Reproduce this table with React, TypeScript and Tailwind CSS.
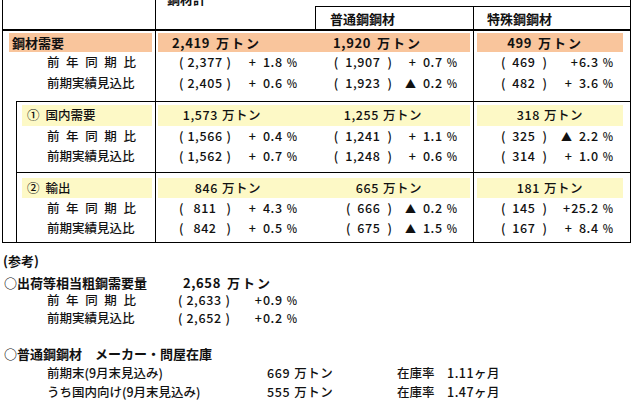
import React from "react";

const ORANGE = "bg-[#f9c59c]";
const YELLOW = "bg-[#fdf9c6]";

function Pct({ v }: { v: string }) {
  const sign = v[0];
  const rest = v.slice(1);
  const spaced = rest.startsWith(" ");
  return (
    <span className="inline-flex items-center whitespace-nowrap">
      <span className={sign === "▲" ? "text-[11px]" : ""}>{sign}</span>
      <span className={spaced ? "ml-[7px] tracking-[0.6px]" : "ml-[1px] tracking-[0.6px]"}>{rest.trim()}</span>
      <span className="ml-[4px] text-[11px]">%</span>
    </span>
  );
}

function Par({ v, wide }: { v: string; wide?: boolean }) {
  return wide ? (
    <span className="inline-flex w-[52px] justify-between whitespace-nowrap">
      <span>(</span>
      <span className="tracking-[0.6px]">{v}</span>
      <span>)</span>
    </span>
  ) : (
    <span className="inline-flex gap-[7px] whitespace-nowrap">
      <span>(</span>
      <span className="tracking-[0.6px]">{v}</span>
      <span>)</span>
    </span>
  );
}

type RowProps = {
  h: string;
  lower?: boolean;
  topLine?: boolean;
  c1?: React.ReactNode;
  c2?: React.ReactNode;
  c3?: React.ReactNode;
  c4?: React.ReactNode;
};

function Row({ h, lower, topLine, c1, c2, c3, c4 }: RowProps) {
  const t = topLine ? "border-t border-black" : "";
  return (
    <div className={`flex ${h}`}>
      {lower ? (
        <div className="flex w-[152px] shrink-0">
          <div className="w-[13px] shrink-0" />
          <div className={`flex-1 border-l border-black ${t}`}>{c1}</div>
        </div>
      ) : (
        <div className="w-[152px] shrink-0">{c1}</div>
      )}
      <div className={`w-[160px] shrink-0 border-l border-black ${t}`}>{c2}</div>
      <div className={`w-[158px] shrink-0 ${t}`}>{c3}</div>
      <div className={`w-[157px] shrink-0 border-l border-black ${t}`}>{c4}</div>
    </div>
  );
}

type Sub = { label: "a" | "b"; v: [string, string, string, string, string, string] };

function Label({ kind }: { kind: "a" | "b" }) {
  return kind === "a" ? (
    <div className="flex w-[89px] justify-between">
      <span>前</span>
      <span>年</span>
      <span>同</span>
      <span>期</span>
      <span>比</span>
    </div>
  ) : (
    <div className="w-[89px] whitespace-nowrap">前期実績見込比</div>
  );
}

function SubRow({ s, lower, h }: { s: Sub; lower?: boolean; h: string }) {
  return (
    <Row
      h={h}
      lower={lower}
      c1={
        <div className={`flex h-full items-center ${lower ? "pl-[30px]" : "pl-[44px]"}`}>
          <Label kind={s.label} />
        </div>
      }
      c2={
        <div className="flex h-full items-center">
          <div className="flex w-[75px] justify-end">
            <Par v={s.v[0]} wide />
          </div>
          <div className="flex w-[66px] justify-end">
            <Pct v={s.v[1]} />
          </div>
        </div>
      }
      c3={
        <div className="flex h-full items-center">
          <div className="flex w-[77px] justify-end">
            <Par v={s.v[2]} />
          </div>
          <div className="flex w-[65px] justify-end">
            <Pct v={s.v[3]} />
          </div>
        </div>
      }
      c4={
        <div className="flex h-full items-center">
          <div className="flex w-[73px] justify-end">
            <Par v={s.v[4]} />
          </div>
          <div className="flex w-[66px] justify-end">
            <Pct v={s.v[5]} />
          </div>
        </div>
      }
    />
  );
}

function Ton({ v, bold }: { v: string; bold?: boolean }) {
  return (
    <span className="inline-flex items-center whitespace-nowrap">
      <span className="tracking-[0.6px]">{v}</span>
      <span className={bold ? "ml-[6px] tracking-[2px]" : "ml-[4px] tracking-[0.5px]"}>万トン</span>
    </span>
  );
}

function BandRow({
  lower,
  topLine,
  h,
  mt,
  bg,
  bandH,
  label,
  vals,
  bold,
}: {
  lower?: boolean;
  topLine?: boolean;
  h: string;
  mt: string;
  bg: string;
  bandH: string;
  label: React.ReactNode;
  vals: [string, string, string];
  bold?: boolean;
}) {
  const fw = bold ? "font-bold text-[13px]" : "";
  return (
    <Row
      h={h}
      lower={lower}
      topLine={topLine}
      c1={
        <div
          className={`${mt} ${bandH} ${bg} ${fw} flex items-center ${
            lower ? "ml-[5px] mr-[3px] pl-[5px]" : "ml-[6px] mr-[3px] pl-[3px]"
          }`}
        >
          {label}
        </div>
      }
      c2={
        <div className={`${mt} ${bandH} ${bg} ${fw} ml-[2px] flex items-center justify-end pr-[54px]`}>
          <Ton v={vals[0]} bold={bold} />
        </div>
      }
      c3={
        <div className={`${mt} ${bandH} ${bg} ${fw} mr-[3px] flex items-center justify-end pr-[48px]`}>
          <Ton v={vals[1]} bold={bold} />
        </div>
      }
      c4={
        <div className={`${mt} ${bandH} ${bg} ${fw} ml-[3px] mr-[7px] flex items-center justify-end pr-[40px]`}>
          <Ton v={vals[2]} bold={bold} />
        </div>
      }
    />
  );
}

export default function App() {
  return (
    <div className="h-[400px] w-[640px] overflow-hidden bg-white text-[12.5px] font-medium leading-none text-[#111] font-['Noto_Sans_CJK_JP','Noto_Sans_CJK_SC',sans-serif]">
      <div className="-mt-[15px] ml-[2px] w-[629px] border-b border-l border-r border-black">
        {/* header */}
        <div className="flex h-[44px]">
          <div className="w-[152px] shrink-0" />
          <div className="w-[160px] shrink-0 border-l border-black pl-[11px] pt-[7px] text-[13px] font-bold">
            鋼材計
          </div>
          <div className="flex w-[315px] shrink-0 flex-col">
            <div className="h-[22px] border-b border-black" />
            <div className="flex h-[22px]">
              <div className="flex w-[158px] shrink-0 items-center border-l border-black pl-[14px] text-[13px] font-bold">
                普通鋼鋼材
              </div>
              <div className="flex w-[157px] shrink-0 items-center border-l border-black pl-[13px] text-[13px] font-bold">
                特殊鋼鋼材
              </div>
            </div>
          </div>
        </div>
        <div className="h-[2px] bg-black" />

        {/* 鋼材需要 */}
        <BandRow
          h="h-[21px]"
          mt="mt-[2px]"
          bandH="h-[19px]"
          bg={ORANGE}
          bold
          label="鋼材需要"
          vals={["2,419", "1,920", "499"]}
        />
        <SubRow h="h-[21px]" s={{ label: "a", v: ["2,377", "+ 1.8", "1,907", "+ 0.7", "469", "+6.3"] }} />
        <SubRow h="h-[21px]" s={{ label: "b", v: ["2,405", "+ 0.6", "1,923", "▲ 0.2", "482", "+ 3.6"] }} />
        <Row h="h-[7px]" />

        {/* ① 国内需要 */}
        <BandRow
          lower
          topLine
          h="h-[25px]"
          mt="mt-[3px]"
          bandH="h-[21px]"
          bg={YELLOW}
          label={
            <span className="whitespace-nowrap">
              ①<span className="ml-[6px]">国内需要</span>
            </span>
          }
          vals={["1,573", "1,255", "318"]}
        />
        <SubRow lower h="h-[20px]" s={{ label: "a", v: ["1,566", "+ 0.4", "1,241", "+ 1.1", "325", "▲ 2.2"] }} />
        <SubRow lower h="h-[20px]" s={{ label: "b", v: ["1,562", "+ 0.7", "1,248", "+ 0.6", "314", "+ 1.0"] }} />
        <Row lower h="h-[6px]" />

        {/* ② 輸出 */}
        <BandRow
          lower
          topLine
          h="h-[26px]"
          mt="mt-[5px]"
          bandH="h-[20px]"
          bg={YELLOW}
          label={
            <span className="whitespace-nowrap">
              ②<span className="ml-[6px]">輸出</span>
            </span>
          }
          vals={["846", "665", "181"]}
        />
        <SubRow lower h="h-[20px]" s={{ label: "a", v: ["811", "+ 4.3", "666", "▲ 0.2", "145", "+25.2"] }} />
        <SubRow lower h="h-[20px]" s={{ label: "b", v: ["842", "+ 0.5", "675", "▲ 1.5", "167", "+ 8.4"] }} />
        <Row lower h="h-[4px]" />
      </div>

      {/* 参考 */}
      <div className="mt-[8px] flex h-[18px] items-center pl-[3px] text-[13px] font-bold">(参考)</div>
      <div className="mt-[4px] flex h-[18px] items-center text-[13px] font-bold">
        <div className="w-[183px] shrink-0 whitespace-nowrap pl-[4px]">○出荷等相当粗鋼需要量</div>
        <Ton v="2,658" bold />
      </div>
      <div className="flex h-[18px] items-center">
        <div className="w-[136px] shrink-0 pl-[47px]">
          <Label kind="a" />
        </div>
        <div className="flex w-[94px] shrink-0 justify-end">
          <Par v="2,633" wide />
        </div>
        <div className="flex w-[67px] shrink-0 justify-end">
          <Pct v="+0.9" />
        </div>
      </div>
      <div className="flex h-[18px] items-center">
        <div className="w-[136px] shrink-0 pl-[47px]">
          <Label kind="b" />
        </div>
        <div className="flex w-[94px] shrink-0 justify-end">
          <Par v="2,652" wide />
        </div>
        <div className="flex w-[67px] shrink-0 justify-end">
          <Pct v="+0.2" />
        </div>
      </div>

      <div className="mt-[17px] flex h-[18px] items-center whitespace-nowrap pl-[4px] text-[13px] font-bold">
        ○普通鋼鋼材　メーカー・問屋在庫
      </div>
      <div className="mt-[2px] flex h-[18px] items-center whitespace-nowrap">
        <div className="w-[267px] shrink-0 pl-[47px]">前期末(9月末見込み)</div>
        <div className="w-[130px] shrink-0">
          <Ton v="669" />
        </div>
        <div className="w-[50px] shrink-0">在庫率</div>
        <div className="tracking-[0.5px]">1.11ヶ月</div>
      </div>
      <div className="mt-[1px] flex h-[19px] items-center whitespace-nowrap">
        <div className="w-[267px] shrink-0 pl-[47px]">うち国内向け(9月末見込み)</div>
        <div className="w-[130px] shrink-0">
          <Ton v="555" />
        </div>
        <div className="w-[50px] shrink-0">在庫率</div>
        <div className="tracking-[0.5px]">1.47ヶ月</div>
      </div>
    </div>
  );
}
